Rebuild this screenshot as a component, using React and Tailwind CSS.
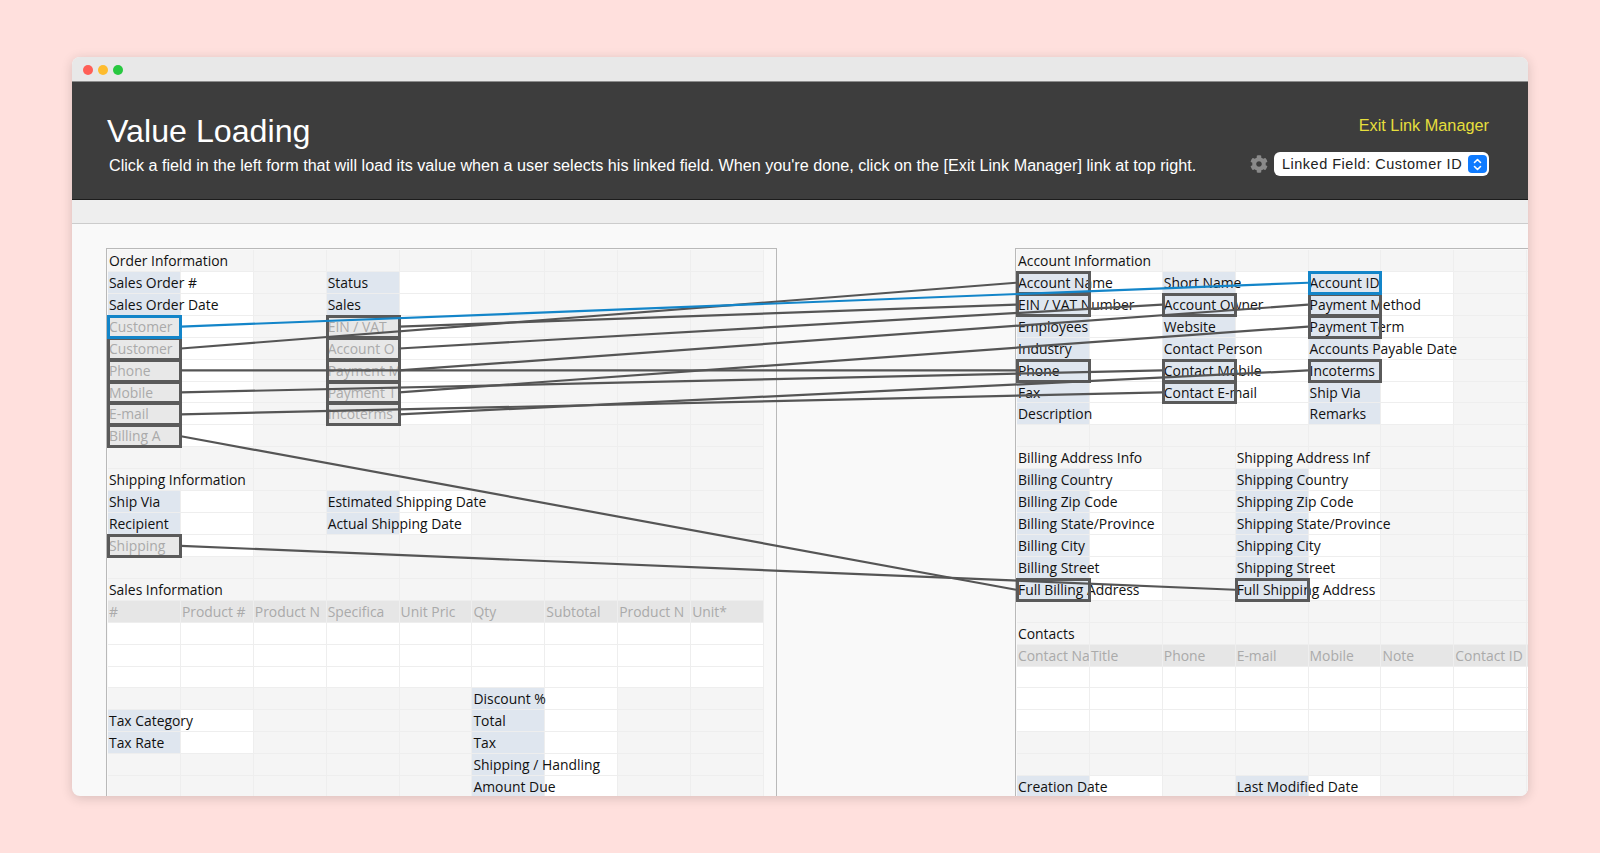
import React from 'react';
import { FaCog } from 'react-icons/fa';

// cell kinds: empty, value (white), label (blue), head (grey column title),
// off (greyed field that is linked), with an optional link box over it
const _ = { kind: 'empty' };
const W = { kind: 'value' };
const T = (text) => ({ kind: 'empty', text });
const L = (text) => ({ kind: 'label', text });
const H = (text) => ({ kind: 'head', text });
const Off = (text, box = 'dark') => ({ kind: 'off', text, box });
const Link = (text, box = 'dark') => ({ kind: 'label', text, box });

const whites = (n) => Array(n).fill(W);
const blank = (n) => Array(n).fill(_);

const LEFT_ROWS = [
    [T('Order Information')],
    [L('Sales Order #'), W, _, L('Status'), W],
    [L('Sales Order Date'), W, _, L('Sales'), W],
    [Off('Customer', 'blue'), W, _, Off('EIN / VAT'), W],
    [Off('Customer'), W, _, Off('Account O'), W],
    [Off('Phone'), W, _, Off('Payment M'), W],
    [Off('Mobile'), W, _, Off('Payment T'), W],
    [Off('E-mail'), W, _, Off('Incoterms'), W],
    [Off('Billing A'), W],
    [],
    [T('Shipping Information')],
    [L('Ship Via'), W, _, L('Estimated Shipping Date'), W],
    [L('Recipient'), W, _, L('Actual Shipping Date'), W],
    [Off('Shipping'), W],
    [],
    [T('Sales Information')],
    ['#', 'Product #', 'Product N', 'Specifica', 'Unit Pric', 'Qty', 'Subtotal', 'Product N', 'Unit*'].map(H),
    whites(9),
    whites(9),
    whites(9),
    [...blank(5), L('Discount %'), W],
    [L('Tax Category'), W, ...blank(3), L('Total'), W],
    [L('Tax Rate'), W, ...blank(3), L('Tax'), W],
    [...blank(5), L('Shipping / Handling'), W],
    [...blank(5), L('Amount Due'), W],
];

const RIGHT_ROWS = [
    [T('Account Information')],
    [Link('Account Name'), W, L('Short Name'), W, Link('Account ID', 'blue'), W],
    [Link('EIN / VAT Number'), W, Link('Account Owner'), W, Link('Payment Method'), W],
    [L('Employees'), W, L('Website'), W, Link('Payment Term'), W],
    [L('Industry'), W, L('Contact Person'), W, L('Accounts Payable Date'), W],
    [Link('Phone'), W, Link('Contact Mobile'), W, Link('Incoterms'), W],
    [L('Fax'), W, Link('Contact E-mail'), W, L('Ship Via'), W],
    [L('Description'), W, W, W, L('Remarks'), W],
    [],
    [T('Billing Address Info'), _, _, T('Shipping Address Inf')],
    [L('Billing Country'), W, _, L('Shipping Country'), W],
    [L('Billing Zip Code'), W, _, L('Shipping Zip Code'), W],
    [L('Billing State/Province'), W, _, L('Shipping State/Province'), W],
    [L('Billing City'), W, _, L('Shipping City'), W],
    [L('Billing Street'), W, _, L('Shipping Street'), W],
    [Link('Full Billing Address'), W, _, Link('Full Shipping Address'), W],
    [],
    [T('Contacts')],
    ['Contact Na', 'Title', 'Phone', 'E-mail', 'Mobile', 'Note', 'Contact ID', ''].map(H),
    whites(8),
    whites(8),
    whites(8),
    [],
    [],
    [L('Creation Date'), W, _, L('Last Modified Date'), W],
];

// row centres in page pixels, so the link ends can be read off the picture
const rowY = (r) => 260.8 + r * 21.93;

const LINKS = [
    [181, rowY(4), 1016, rowY(1)],
    [399, rowY(3), 1016, rowY(2)],
    [399, rowY(4), 1162, rowY(2)],
    [399, rowY(5), 1308, rowY(2)],
    [399, rowY(6), 1308, rowY(3)],
    [399, rowY(7), 1308, rowY(5)],
    [181, rowY(5), 1016, rowY(5)],
    [181, rowY(6), 1162, rowY(5)],
    [181, rowY(7), 1162, rowY(6)],
    [181, rowY(8), 1016, rowY(15)],
    [181, rowY(13), 1235, rowY(15)],
];

const cellBg = {
    empty: 'bg-[#f5f5f5]',
    value: 'bg-white',
    label: 'bg-[#dfe6ef]',
    head: 'bg-[#e6e6e6]',
    off: 'bg-[#e8e8e8]',
};

const Cell = ({ cell }) => {
    const greyed = cell.kind === 'head' || cell.kind === 'off';
    return (
        <div className={`relative border-r border-b border-[#eeeeee] ${cellBg[cell.kind]}`}>
            {cell.text && (
                <span className={`relative z-[1] block pl-[1px] whitespace-nowrap ${greyed ? 'overflow-hidden text-[#aaaaaa]' : 'text-[#111111]'}`}>
                    {cell.text}
                </span>
            )}
            {cell.box && (
                <span className={`absolute -top-px -left-px -right-[2px] bottom-[-2px] ${cell.box === 'blue' ? 'z-[3] border-[3px] border-[#1385c9]' : 'z-[2] border-[3px] border-[#5a5a5a]'}`} />
            )}
        </div>
    );
};

const Form = ({ rows, cols, className }) => (
    <div className={`shrink-0 pt-px pl-px border-t border-l border-[#b9b9b9] ${className}`}>
        <div className="grid grid-cols-[repeat(var(--cols),72.9px)] auto-rows-[21.93px] font-['Open_Sans',sans-serif] text-[13.9px] leading-[21px]" style={{ '--cols': cols }}>
            {rows.flatMap((row, r) => {
                const filled = [...row, ...blank(cols - row.length)];
                return filled.map((cell, c) => <Cell key={`${r}-${c}`} cell={cell} />);
            })}
        </div>
    </div>
);

const Stepper = () => (
    <span className="flex h-[18px] w-[19px] shrink-0 items-center justify-center rounded-[4px] bg-[#0f7bff]">
        <svg width="11" height="15" viewBox="0 0 11 15" fill="none" stroke="white" strokeWidth="1.6" strokeLinecap="round" strokeLinejoin="round">
            <path d="M2.5 5.5 5.5 2.5l3 3" />
            <path d="M2.5 9.5l3 3 3-3" />
        </svg>
    </span>
);

export default function App() {
    return (
        <div className="h-[853px] overflow-hidden bg-[#ffe0dd] pt-[57px] pl-[72px]">
            <div className="h-[739px] w-[1456px] overflow-hidden rounded-lg bg-[#f9f9f9] shadow-[0_2px_12px_rgba(0,0,0,0.16)]">
                {/* window title bar */}
                <div className="flex h-[25px] items-center gap-[5px] border-b border-[#8c8c8c] bg-[#e8e8e8] pt-[2px] pl-[11px]">
                    <span className="h-[10px] w-[10px] rounded-full bg-[#ff5f57]" />
                    <span className="h-[10px] w-[10px] rounded-full bg-[#febc2e]" />
                    <span className="h-[10px] w-[10px] rounded-full bg-[#28c840]" />
                </div>

                {/* dark header */}
                <div className="flex h-[118px] justify-between border-b border-[#1c1c1c] bg-[#3d3d3d] pl-[35px] pr-[39px] font-['Liberation_Sans',sans-serif]">
                    <div className="pt-[30px]">
                        <h1 className="text-[32.2px] leading-[38px] text-white">Value Loading</h1>
                        <p className="mt-[3px] ml-[2px] text-[16.18px] leading-[24px] text-white">
                            Click a field in the left form that will load its value when a user selects his linked field. When you're done, click on the [Exit Link Manager] link at top right.
                        </p>
                    </div>
                    <div className="flex flex-col items-end pt-[31px]">
                        <a className="text-[16.3px] leading-[24px] text-[#e6df3c]">Exit Link Manager</a>
                        <div className="mt-[15px] flex items-center gap-[6px]">
                            <FaCog className="h-[18px] w-[18px] text-[#8a8a8a]" />
                            <div className="flex h-[24px] w-[215px] items-center justify-between rounded-[6px] bg-white pl-[8px] pr-[2px]">
                                <span className="whitespace-nowrap pt-[2px] text-[14.5px] tracking-[0.5px] text-[#222222]">Linked Field: Customer ID</span>
                                <Stepper />
                            </div>
                        </div>
                    </div>
                </div>

                <div className="h-[24px] border-b border-[#cccccc] bg-[#eeeeee]" />

                {/* the two forms, with the links drawn over them */}
                <div className="relative flex h-[572px] gap-[238px] overflow-hidden pt-[24px] pl-[34px]">
                    <Form rows={LEFT_ROWS} cols={9} className="w-[671px] border-r" />
                    <Form rows={RIGHT_ROWS} cols={8} className="w-[600px]" />
                    <svg className="absolute left-0 top-0 z-10 h-full w-full" viewBox="72 224 1456 572" fill="none" strokeWidth="2.2">
                        {LINKS.map(([x1, y1, x2, y2], i) => (
                            <line key={i} x1={x1} y1={y1} x2={x2} y2={y2} stroke="#555555" />
                        ))}
                        <line x1="181" y1={rowY(3)} x2="1308" y2={rowY(1)} stroke="#1385c9" />
                    </svg>
                </div>
            </div>
        </div>
    );
}
